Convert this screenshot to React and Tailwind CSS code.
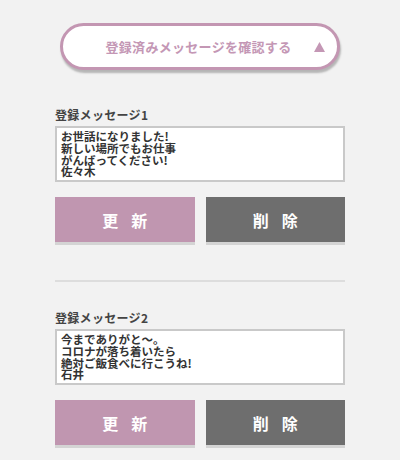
import React from 'react';

const messages = [
  {
    id: 1,
    text: 'お世話になりました!\n新しい場所でもお仕事\nがんばってください!\n佐々木',
  },
  {
    id: 2,
    text: '今までありがと〜。\nコロナが落ち着いたら\n絶対ご飯食べに行こうね!\n石井',
  },
];

const font = { fontFamily: '"Noto Sans CJK JP", "Noto Sans", sans-serif' };

function MessageBlock({ item }) {
  return (
    <div className="flex flex-col">
      <label className="text-[12px] leading-[14px] font-bold text-[#444] tracking-[0.3px]">
        登録メッセージ{item.id}
      </label>
      <textarea
        readOnly
        defaultValue={item.text}
        style={font}
        className="mt-[4px] h-[56px] w-full resize-none overflow-hidden border-2 border-[#c9c9c9] bg-white px-[4px] pt-[3px] text-[11.5px] leading-[11.8px] font-bold text-[#333] outline-none"
      />
      <div className="mt-[15px] flex gap-[11px]">
        <button className="h-[45px] flex-1 bg-[#c096b0] text-[16px] font-bold text-white tracking-[13px] shadow-[0_3px_0_#d4d4d4] pl-[13px]">
          更新
        </button>
        <button className="h-[45px] flex-1 bg-[#6e6e6e] text-[16px] font-bold text-white tracking-[13px] shadow-[0_3px_0_#d4d4d4] pl-[13px]">
          削除
        </button>
      </div>
    </div>
  );
}

export default function App() {
  return (
    <div className="min-h-[460px] w-full bg-[#f2f2f2]" style={font}>
      <div className="mx-auto flex w-[290px] flex-col pt-[23px]">
        <button className="mx-auto flex h-[47px] w-[280px] items-center rounded-full border-[3px] border-[#c396b2] bg-white shadow-[1px_3px_2px_rgba(0,0,0,0.25)]">
          <span className="flex-1 pl-[20px] text-center text-[13px] font-bold text-[#c497b5] tracking-[0.3px]">
            登録済みメッセージを確認する
          </span>
          <svg width="11" height="10" viewBox="0 0 11 10" className="mr-[12px]">
            <polygon points="5.5,0 11,10 0,10" fill="#c497b5" />
          </svg>
        </button>

        <div className="mt-[38px]">
          <MessageBlock item={messages[0]} />
        </div>

        <div className="mt-[38px] h-[2px] w-full bg-[#dddddd]" />

        <div className="mt-[29px]">
          <MessageBlock item={messages[1]} />
        </div>
      </div>
    </div>
  );
}
